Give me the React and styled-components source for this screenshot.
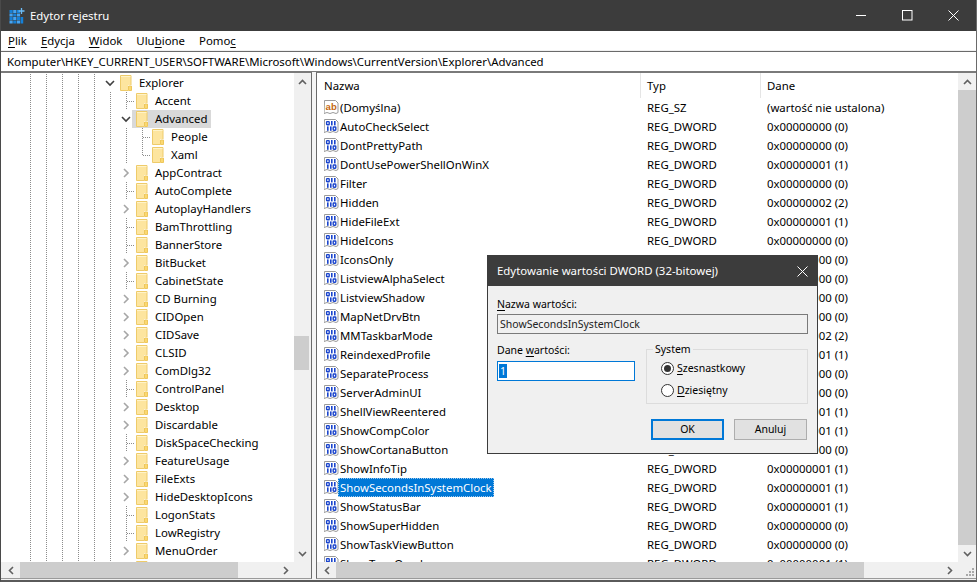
import React from "react";
import styled, { createGlobalStyle } from "styled-components";

const FONT = `"Noto Sans", "Open Sans", "Liberation Sans", sans-serif`;

const Global = createGlobalStyle`
  html, body { margin: 0; padding: 0; background: #fff; overflow: hidden; }
  * { box-sizing: border-box; }
  u { text-decoration-thickness: 1px; text-underline-offset: 2px; }
`;

const Window = styled.div`
  width: 977px; height: 582px; display: flex; flex-direction: column; position: relative;
  border-left: 1px solid #4a4a4a; border-right: 1px solid #6a6a6a; border-bottom: 2px solid #5a5a5a;
  background: #f0f0f0; font: 11.4px/16px ${FONT}; color: #000; overflow: hidden;
`;
const TitleBar = styled.div`
  height: 31px; flex: none; background: #3c3c3c; color: #fff; display: flex; align-items: center; padding-left: 8px;
`;
const TitleText = styled.span` margin-left: 5px; flex: 1; `;
const WinBtn = styled.div`
  width: 46px; height: 31px; display: flex; align-items: center; justify-content: center;
`;
const MenuBar = styled.div`
  height: 19px; flex: none; background: #fff; display: flex; align-items: center; gap: 14px; padding-left: 7px;
`;
const AddressBar = styled.div`
  height: 22px; flex: none; padding-top: 1px; background: #f0f0f0;
`;
const AddressInner = styled.div`
  height: 21px; background: #fff; border-top: 1px solid #6a6a6a; border-bottom: 1px solid #7a7a7a;
  padding-left: 6px; line-height: 19px; white-space: nowrap;
`;
const Panes = styled.div` flex: 1; min-height: 0; display: flex; padding-bottom: 1px; `;
const TreePane = styled.div`
  width: 311px; flex: none; display: flex; flex-direction: column; background: #fff;
  border-top: 1px solid #7a7a7a; border-right: 1px solid #6a6a6a; border-bottom: 1px solid #9a9a9a;
`;
const Splitter = styled.div` width: 4px; flex: none; background: #f4f4f4; `;
const ListPane = styled.div`
  flex: 1; min-width: 0; display: flex; flex-direction: column; background: #fff;
  border-top: 1px solid #7a7a7a; border-left: 1px solid #6a6a6a; border-bottom: 1px solid #9a9a9a;
`;
const PaneBody = styled.div` flex: 1; min-height: 0; display: flex; `;
const TreeArea = styled.div` flex: 1; min-width: 0; overflow: hidden; padding-top: 1px; `;
const ListArea = styled.div` flex: 1; min-width: 0; overflow: hidden; `;

const dotV = x => `repeating-linear-gradient(to bottom,#8c8c8c 0 1px,transparent 1px 2px) ${x}px 0 / 1px 100% no-repeat`;
const dotVHalf = x => `repeating-linear-gradient(to bottom,#8c8c8c 0 1px,transparent 1px 2px) ${x}px 0 / 1px 9px no-repeat`;
const dotH = (x, w) => `repeating-linear-gradient(to right,#8c8c8c 0 1px,transparent 1px 2px) ${x}px 9px / ${w}px 1px no-repeat`;

const TreeRow = styled.div`
  height: 18px; display: flex; align-items: center; white-space: nowrap;
  padding-left: ${p => 103 + p.$level * 16}px;
  background: ${p => p.$guides};
`;
const Expander = styled.div`
  width: 12px; height: 18px; flex: none; display: flex; align-items: center; justify-content: center;
`;
const Node = styled.div`
  height: 18px; display: flex; align-items: center; gap: 7px; padding: 0 4px;
  background: ${p => (p.$selected ? "#d9d9d9" : "transparent")};
`;

const Scrollbar = styled.div`
  width: ${p => p.$w}px; flex: none; background: #f0f0f0; display: flex; flex-direction: column; align-items: stretch;
`;
const ScrollTrack = styled.div`
  flex: 1; min-height: 0; display: flex; flex-direction: column; padding-top: ${p => p.$top}px; padding-right: ${p => p.$inset || 0}px;
`;
const ScrollThumbV = styled.div` height: ${p => (p.$h ? p.$h + "px" : "auto")}; flex: ${p => (p.$h ? "none" : 1)}; background: #cdcdcd; `;
const ArrowBox = styled.div` height: 17px; flex: none; display: flex; align-items: center; justify-content: center; `;
const HScroll = styled.div` height: 16px; flex: none; background: #f0f0f0; display: flex; align-items: stretch; `;
const HArrow = styled.div` width: ${p => p.$w || 17}px; flex: none; display: flex; align-items: center; justify-content: center; `;
const HTrack = styled.div` flex: 1; min-width: 0; display: flex; padding-right: ${p => p.$right}px; `;
const HThumb = styled.div` flex: 1; background: #cdcdcd; `;
const Corner = styled.div` width: ${p => p.$w}px; flex: none; display: flex; align-items: flex-end; justify-content: flex-end; padding: 0 1px 1px 0; `;

const ListHeader = styled.div` height: 25px; flex: none; display: flex; `;
const HeadCell = styled.div`
  width: ${p => p.$w}px; flex: ${p => (p.$w ? "none" : 1)}; padding-left: ${p => p.$pad}px; line-height: 26px;
  border-right: ${p => (p.$w ? "1px solid #e5e5e5" : "0")};
`;
const ListRow = styled.div`
  height: 19px; display: grid; grid-template-columns: 323px 120px 1fr; padding-left: 7px; white-space: nowrap; align-items: center;
`;
const NameCell = styled.div` display: flex; align-items: center; height: 19px; `;
const NameText = styled.span`
  margin-left: -1px; padding: 0 2px; height: 19px; line-height: 20px;
  ${p => p.$selected && `background:#0078d7;color:#fff;outline:1px dotted #9cc9ee;outline-offset:-1px;`}
`;
const Cell = styled.div``;

const Dialog = styled.div`
  position: absolute; left: 486px; top: 255px; width: 331px; height: 199px; background: #f0f0f0;
  border: 1px solid #3c3c3c; display: flex; flex-direction: column;
`;
const DialogTitle = styled.div`
  height: 30px; flex: none; background: #3c3c3c; color: #fff; display: flex; align-items: center; justify-content: space-between;
  padding: 0 9px; 
`;
const DialogBody = styled.div` flex: 1; padding: 10px 9px 0 9px; display: flex; flex-direction: column; font-size: 10.5px; `;
const ReadOnly = styled.div`
  height: 20px; margin-top: 2px; background: #f0f0f0; border: 1px solid #7a7a7a; padding-left: 2px; line-height: 18px; color: #222;
`;
const Columns = styled.div` display: flex; margin-top: 8px; gap: 11px; `;
const ValueCol = styled.div` width: 138px; flex: none; `;
const ValueInput = styled.div`
  height: 20px; margin-top: 3px; background: #fff; border: 1px solid #0078d7; padding: 2px 0 0 1px;
`;
const SelText = styled.span` display: inline-block; height: 14px; line-height: 14px; padding: 0 1px; background: #0078d7; color: #fff; vertical-align: top; `;
const Group = styled.fieldset`
  flex: 1; height: 62px; margin: 0; padding: 1px 0 0 14px; border: 1px solid #dcdcdc; min-width: 0;
`;
const GroupLegend = styled.legend` padding: 0 2px; margin-left: -8px; line-height: 14px; `;
const RadioRow = styled.div` display: flex; align-items: center; gap: 3px; height: 22px; `;
const Radio = styled.div`
  width: 13px; height: 13px; border-radius: 50%; border: 1px solid #333; background: #fff;
  display: flex; align-items: center; justify-content: center;
`;
const RadioDot = styled.div` width: 7px; height: 7px; border-radius: 50%; background: #333; `;
const Buttons = styled.div` display: flex; justify-content: flex-end; gap: 10px; margin-top: 15px; padding-right: 1px; `;
const Btn = styled.div`
  width: 73px; height: 21px; background: #e1e1e1; text-align: center;
  border: ${p => (p.$primary ? "2px solid #0078d7" : "1px solid #adadad")};
  line-height: ${p => (p.$primary ? "17px" : "19px")};
`;

/* ---- icons ---- */
const AppIcon = () => (
  <svg width="16" height="16" viewBox="0 0 16 16" style={{ flex: "none" }}>
    {[0, 1, 2, 3].map(r => [0, 1, 2].map(c => (
      <rect key={r + "-" + c} x={0.5 + c * 3.7} y={2 + r * 3.5} width="3.2" height="3"
        fill={(r + c) % 2 ? "#45a3f2" : "#1580d8"} />
    )))}
    <rect x="11.6" y="9" width="2.6" height="6.5" fill="#1580d8" />
    <path d="M12.5 0v6M9.5 3h6" stroke="#6cbcf7" strokeWidth="1.3" />
  </svg>
);
const Min = () => <svg width="11" height="11" viewBox="0 0 11 11"><path d="M0 5.5h10" stroke="#fff" /></svg>;
const Max = () => <svg width="11" height="11" viewBox="0 0 11 11"><rect x="0.5" y="0.5" width="9.5" height="9.5" fill="none" stroke="#fff" /></svg>;
const Close = () => <svg width="11" height="11" viewBox="0 0 11 11"><path d="M.5.5l10 10M10.5.5l-10 10" stroke="#fff" /></svg>;

const Folder = () => (
  <svg width="12" height="16" viewBox="0 0 12 16" style={{ flex: "none", display: "block" }}>
    <path d="M.5.5h10.5v15H.5z" fill="#fde59f" stroke="#eecb6a" />
    <rect x="8" y="10" width="4" height="6" fill="#fff" />
    <path d="M8.5 15.5v-4.5h3v4.5z" fill="#fbd871" stroke="#eec75c" />
    <path d="M1 1h9.5v1H1z" fill="#fff3c8" />
  </svg>
);
const ChevOpen = () => <svg width="10" height="7" viewBox="0 0 10 7"><path d="M1 1l4 4 4-4" fill="none" stroke="#404040" strokeWidth="1.6" /></svg>;
const ChevClosed = () => <svg width="7" height="10" viewBox="0 0 7 10"><path d="M1 1l4 4-4 4" fill="none" stroke="#a6a6a6" strokeWidth="1.6" /></svg>;

const SbUp = () => <svg width="9" height="6" viewBox="0 0 9 6"><path d="M1 5l3.5-3.5L8 5" fill="none" stroke="#606060" strokeWidth="1.6" /></svg>;
const SbDown = () => <svg width="9" height="6" viewBox="0 0 9 6"><path d="M1 1l3.5 3.5L8 1" fill="none" stroke="#606060" strokeWidth="1.6" /></svg>;
const SbLeft = () => <svg width="6" height="9" viewBox="0 0 6 9"><path d="M5 1L1.5 4.5 5 8" fill="none" stroke="#606060" strokeWidth="1.6" /></svg>;
const SbRight = () => <svg width="6" height="9" viewBox="0 0 6 9"><path d="M1 1l3.5 3.5L1 8" fill="none" stroke="#606060" strokeWidth="1.6" /></svg>;
const GripIcon = () => (
  <svg width="10" height="10" viewBox="0 0 10 10" fill="#a9a9a9">
    <rect x="7" y="1" width="2" height="2" /><rect x="4" y="4" width="2" height="2" /><rect x="7" y="4" width="2" height="2" />
    <rect x="1" y="7" width="2" height="2" /><rect x="4" y="7" width="2" height="2" /><rect x="7" y="7" width="2" height="2" />
  </svg>
);

const Page = () => (
  <path d="M.5.5h11l2.5 2.5v9.5l-2 1-3-1-3 1-3-1-3 1z" fill="#fff" stroke="#9a9a9a" />
);
const BinIcon = () => (
  <svg width="15" height="15" viewBox="0 0 15 15" style={{ flex: "none", display: "block" }}>
    <Page />
    <g fill="none" stroke="#1a44cc" strokeWidth="1.4">
      <rect x="2.6" y="2.6" width="2.6" height="3.2" rx=".6" />
      <rect x="9.2" y="8" width="2.6" height="3.2" rx=".6" />
    </g>
    <g fill="#1a44cc">
      <rect x="7" y="2" width="1.6" height="4.4" />
      <rect x="10" y="2" width="1.6" height="4.4" />
      <rect x="3" y="7.4" width="1.6" height="4.4" />
      <rect x="6" y="7.4" width="1.6" height="4.4" />
    </g>
  </svg>
);
const StrIcon = () => (
  <svg width="15" height="15" viewBox="0 0 15 15" style={{ flex: "none", display: "block" }}>
    <Page />
    <text x="1.6" y="10.2" fontFamily="'Liberation Sans',sans-serif" fontWeight="700" fontSize="9.5" fill="#c4660e">ab</text>
  </svg>
);

/* ---- data ---- */
const TREE = [
  ["Explorer", 0, "open"], ["Accent", 1], ["Advanced", 1, "open", true], ["People", 2], ["Xaml", 2, null, false, true],
  ["AppContract", 1, "closed"], ["AutoComplete", 1], ["AutoplayHandlers", 1, "closed"], ["BamThrottling", 1], ["BannerStore", 1],
  ["BitBucket", 1, "closed"], ["CabinetState", 1], ["CD Burning", 1, "closed"], ["CIDOpen", 1, "closed"], ["CIDSave", 1, "closed"],
  ["CLSID", 1, "closed"], ["ComDlg32", 1, "closed"], ["ControlPanel", 1], ["Desktop", 1, "closed"], ["Discardable", 1, "closed"],
  ["DiskSpaceChecking", 1], ["FeatureUsage", 1, "closed"], ["FileExts", 1, "closed"], ["HideDesktopIcons", 1, "closed"],
  ["LogonStats", 1], ["LowRegistry", 1], ["MenuOrder", 1, "closed"], ["", 1, "closed"],
];

const D0 = "0x00000000 (0)", D1 = "0x00000001 (1)", D2 = "0x00000002 (2)";
const VALUES = [
  ["(Domyślna)", "REG_SZ", "(wartość nie ustalona)"],
  ["AutoCheckSelect", "REG_DWORD", D0], ["DontPrettyPath", "REG_DWORD", D0], ["DontUsePowerShellOnWinX", "REG_DWORD", D1],
  ["Filter", "REG_DWORD", D0], ["Hidden", "REG_DWORD", D2], ["HideFileExt", "REG_DWORD", D1], ["HideIcons", "REG_DWORD", D0],
  ["IconsOnly", "REG_DWORD", D0], ["ListviewAlphaSelect", "REG_DWORD", D0], ["ListviewShadow", "REG_DWORD", D0],
  ["MapNetDrvBtn", "REG_DWORD", D0], ["MMTaskbarMode", "REG_DWORD", D2], ["ReindexedProfile", "REG_DWORD", D1],
  ["SeparateProcess", "REG_DWORD", D0], ["ServerAdminUI", "REG_DWORD", D0], ["ShellViewReentered", "REG_DWORD", D1],
  ["ShowCompColor", "REG_DWORD", D1], ["ShowCortanaButton", "REG_DWORD", D0], ["ShowInfoTip", "REG_DWORD", D1],
  ["ShowSecondsInSystemClock", "REG_DWORD", D1], ["ShowStatusBar", "REG_DWORD", D1], ["ShowSuperHidden", "REG_DWORD", D0],
  ["ShowTaskViewButton", "REG_DWORD", D0], ["ShowTypeOverlay", "REG_DWORD", D1],
];

const BASE = [29, 45, 61, 77, 93];
function rowGuides([, level, exp, , last], i) {
  const parts = BASE.map(dotV);
  if (i > 0) parts.push(dotV(109));
  if (level === 1 && !exp) { parts.push(dotV(125)); parts.push(dotH(126, 8)); }
  if (level === 2) {
    parts.push(dotV(125));
    parts.push(last ? dotVHalf(141) : dotV(141));
    parts.push(dotH(142, 8));
  }
  return parts.join(",");
}

export default function App() {
  return (
    <>
      <Global />
      <Window>
        <TitleBar>
          <AppIcon />
          <TitleText>Edytor rejestru</TitleText>
          <WinBtn><Min /></WinBtn>
          <WinBtn><Max /></WinBtn>
          <WinBtn><Close /></WinBtn>
        </TitleBar>
        <MenuBar>
          <span><u>P</u>lik</span>
          <span><u>E</u>dycja</span>
          <span><u>W</u>idok</span>
          <span>Ulu<u>b</u>ione</span>
          <span>Pomo<u>c</u></span>
        </MenuBar>
        <AddressBar>
          <AddressInner>Komputer\HKEY_CURRENT_USER\SOFTWARE\Microsoft\Windows\CurrentVersion\Explorer\Advanced</AddressInner>
        </AddressBar>
        <Panes>
          <TreePane>
            <PaneBody>
              <TreeArea>
                {TREE.map((t, i) => (
                  <TreeRow key={t[0] || "clipped"} $level={t[1]} $guides={rowGuides(t, i)}>
                    <Expander>{t[2] === "open" ? <ChevOpen /> : t[2] === "closed" ? <ChevClosed /> : null}</Expander>
                    <Node $selected={t[3]}><Folder /><span>{t[0]}</span></Node>
                  </TreeRow>
                ))}
              </TreeArea>
              <Scrollbar $w={17}>
                <ArrowBox><SbUp /></ArrowBox>
                <ScrollTrack $top={246} $inset={2}><ScrollThumbV $h={34} /></ScrollTrack>
                <ArrowBox><SbDown /></ArrowBox>
              </Scrollbar>
            </PaneBody>
            <HScroll>
              <HArrow $w={19}><SbLeft /></HArrow>
              <HTrack $right={39}><HThumb /></HTrack>
              <HArrow $w={17}><SbRight /></HArrow>
              <Corner $w={17} />
            </HScroll>
          </TreePane>
          <Splitter />
          <ListPane>
            <PaneBody>
              <ListArea>
                <ListHeader>
                  <HeadCell $w={324} $pad={7}>Nazwa</HeadCell>
                  <HeadCell $w={120} $pad={6}>Typ</HeadCell>
                  <HeadCell $pad={6}>Dane</HeadCell>
                </ListHeader>
                {VALUES.map((v, i) => (
                  <ListRow key={v[0]}>
                    <NameCell>
                      {i === 0 ? <StrIcon /> : <BinIcon />}
                      <NameText $selected={v[0] === "ShowSecondsInSystemClock"}>{v[0]}</NameText>
                    </NameCell>
                    <Cell>{v[1]}</Cell>
                    <Cell>{v[2]}</Cell>
                  </ListRow>
                ))}
              </ListArea>
              <Scrollbar $w={18}>
                <ArrowBox><SbUp /></ArrowBox>
                <ScrollTrack $top={0}><ScrollThumbV /></ScrollTrack>
                <ArrowBox><SbDown /></ArrowBox>
              </Scrollbar>
            </PaneBody>
            <HScroll>
              <HArrow $w={19}><SbLeft /></HArrow>
              <HTrack $right={77}><HThumb /></HTrack>
              <HArrow $w={17}><SbRight /></HArrow>
              <Corner $w={18}><GripIcon /></Corner>
            </HScroll>
          </ListPane>
        </Panes>
        <Dialog>
          <DialogTitle>
            <span>Edytowanie wartości DWORD (32-bitowej)</span>
            <Close />
          </DialogTitle>
          <DialogBody>
            <div><u>N</u>azwa wartości:</div>
            <ReadOnly>ShowSecondsInSystemClock</ReadOnly>
            <Columns>
              <ValueCol>
                <div>Dane <u>w</u>artości:</div>
                <ValueInput><SelText>1</SelText></ValueInput>
              </ValueCol>
              <Group>
                <GroupLegend>System</GroupLegend>
                <RadioRow><Radio><RadioDot /></Radio><span><u>S</u>zesnastkowy</span></RadioRow>
                <RadioRow><Radio /><span><u>D</u>ziesiętny</span></RadioRow>
              </Group>
            </Columns>
            <Buttons>
              <Btn $primary>OK</Btn>
              <Btn>Anuluj</Btn>
            </Buttons>
          </DialogBody>
        </Dialog>
      </Window>
    </>
  );
}
